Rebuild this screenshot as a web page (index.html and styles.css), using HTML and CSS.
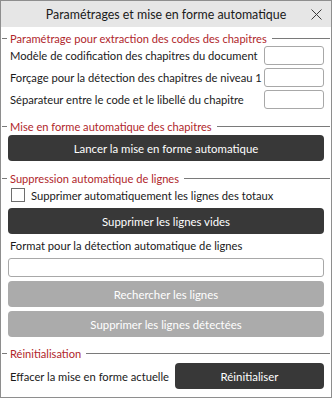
FILE: index.html
```html
<!DOCTYPE html>
<html lang="fr">
<head>
<meta charset="utf-8">
<title>Paramétrages et mise en forme automatique</title>
<link rel="stylesheet" href="styles.css">
</head>
<body>
<div class="window">
  <div class="titlebar">
    <span class="title">Paramétrages et mise en forme automatique</span>
    <span class="close">
      <svg width="11" height="11" viewBox="0 0 11 11"><path d="M0.5 0.5 L10.5 10.5 M10.5 0.5 L0.5 10.5" stroke="#3a3a3a" stroke-width="1" fill="none"/></svg>
    </span>
  </div>
  <div class="content">
    <div class="legend legend-1"><span>Paramétrage pour extraction des codes des chapitres</span></div>
    <div class="field-row">
      <span class="label">Modèle de codification des chapitres du document</span>
      <input class="small-input" type="text">
    </div>
    <div class="field-row">
      <span class="label">Forçage pour la détection des chapitres de niveau 1</span>
      <input class="small-input" type="text">
    </div>
    <div class="field-row">
      <span class="label">Séparateur entre le code et le libellé du chapitre</span>
      <input class="small-input" type="text">
    </div>

    <div class="legend legend-2"><span>Mise en forme automatique des chapitres</span></div>
    <button class="btn btn-dark btn-first">Lancer la mise en forme automatique</button>

    <div class="legend legend-3"><span>Suppression automatique de lignes</span></div>
    <label class="check-row"><span class="checkbox"></span><span>Supprimer automatiquement les lignes des totaux</span></label>
    <button class="btn btn-dark btn-vides">Supprimer les lignes vides</button>
    <div class="plain-label">Format pour la détection automatique de lignes</div>
    <input class="wide-input" type="text">
    <button class="btn btn-disabled btn-search">Rechercher les lignes</button>
    <button class="btn btn-disabled btn-delete">Supprimer les lignes détectées</button>

    <div class="legend legend-4"><span>Réinitialisation</span></div>
    <div class="reset-row">
      <span class="label">Effacer la mise en forme actuelle</span>
      <button class="btn btn-dark btn-reset">Réinitialiser</button>
    </div>
  </div>
</div>
</body>
</html>
```

FILE: styles.css
```css
html, body {
  margin: 0;
  padding: 0;
  background: #ffffff;
}

.window {
  width: 332px;
  height: 398px;
  box-sizing: border-box;
  border: 1px solid #8e8e8e;
  background: #ffffff;
  font-family: Lato, "Noto Sans", sans-serif;
  font-size: 11.2px;
  color: #1a1a1a;
  overflow: hidden;
}

.titlebar {
  height: 26px;
  background: #e6e6e6;
  display: flex;
  align-items: center;
  justify-content: center;
  position: relative;
}

.title {
  font-size: 12.4px;
  color: #1a1a1a;
  white-space: nowrap;
}

.close {
  position: absolute;
  right: 9px;
  top: 8px;
  width: 11px;
  height: 11px;
  display: flex;
}

.content {
  padding: 3px 7px 0 7px;
  display: flex;
  flex-direction: column;
}

.legend {
  display: flex;
  align-items: center;
  height: 16px;
  margin: 0 -6px;
  color: #b0262b;
  font-size: 11.1px;
  white-space: nowrap;
}

.legend::before {
  content: "";
  width: 5px;
  height: 1px;
  background: #7a7a7a;
  margin-right: 3px;
}

.legend::after {
  content: "";
  flex: 1;
  height: 1px;
  background: #7a7a7a;
  margin-left: 5px;
}

.legend-2 { margin-top: 9px; }
.legend-3 { margin-top: 9px; }
.legend-4 { margin-top: 8px; }

.field-row {
  display: flex;
  align-items: center;
  justify-content: space-between;
  height: 19px;
  margin-top: 3px;
  padding-left: 2px;
}

.label {
  white-space: nowrap;
}

.legend-1 + .field-row { margin-top: 0; }

.small-input {
  width: 60px;
  height: 19px;
  box-sizing: border-box;
  border: 1px solid #a8a8a8;
  border-radius: 3px;
  margin: 0;
  padding: 0;
  background: #fff;
  flex: none;
}

.btn {
  font-family: inherit;
  font-size: 11.4px;
  color: #ffffff;
  border: none;
  border-radius: 4px;
  height: 26px;
  margin: 0;
  padding: 0;
  box-sizing: border-box;
  width: 100%;
  flex: none;
  white-space: nowrap;
}

.btn-dark { background: #383838; }
.btn-disabled { background: #ababab; }

.btn-first { margin-top: 1px; }

.check-row {
  display: flex;
  align-items: center;
  height: 16px;
  margin-top: 1px;
  padding-left: 3px;
  gap: 6px;
  white-space: nowrap;
}

.checkbox {
  width: 14px;
  height: 14px;
  box-sizing: border-box;
  border: 1px solid #6e6e6e;
  background: #fff;
  flex: none;
}

.btn-vides { margin-top: 5px; }

.plain-label {
  height: 16px;
  line-height: 16px;
  margin-top: 4px;
  padding-left: 2px;
  white-space: nowrap;
}

.wide-input {
  height: 19px;
  box-sizing: border-box;
  width: 100%;
  border: 1px solid #a8a8a8;
  border-radius: 3px;
  margin: 4px 0 0 0;
  padding: 0;
  background: #fff;
}

.btn-search { margin-top: 4px; }
.btn-delete { margin-top: 4px; }

.reset-row {
  display: flex;
  align-items: center;
  justify-content: space-between;
  margin-top: 2px;
  padding-left: 2px;
}

.btn-reset {
  width: 149px;
}
```
